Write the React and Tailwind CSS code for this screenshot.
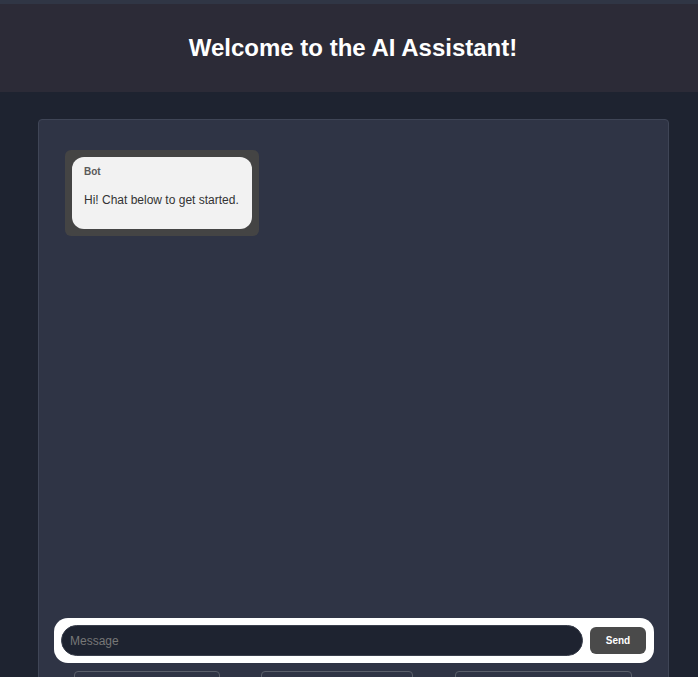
import React from "react"

const suggestions = [
  { w: "w-[146px]", label: "" },
  { w: "w-[152px]", label: "" },
  { w: "w-[177px]", label: "" },
]

const App = () => {
  return (
    <div className="min-h-[677px] bg-[#1e2330] font-['Liberation_Sans',Arial,sans-serif]">
      <div className="h-[4px] bg-[#303645]" />
      <header className="h-[88px] bg-[#2c2b37] flex items-center justify-center pl-[8px]">
        <h1 className="text-[24px] font-bold text-white">Welcome to the AI Assistant!</h1>
      </header>

      <main className="pt-[27px] pl-[38px]">
        <div className="w-[631px] h-[583px] bg-[#2f3445] border border-[#3f4556] rounded-[4px] flex flex-col">
          <div className="flex-1 pt-[30px] pl-[26px]">
            <div className="inline-block bg-[#444444] rounded-[6px] p-[7px]">
              <div className="bg-[#f2f2f2] rounded-[12px] w-[180px] h-[72px] pl-[12px] pt-[9px]">
                <div className="text-[10px] font-bold text-[#5a5a5a] leading-[12px]">Bot</div>
                <div className="text-[12px] text-[#333333] mt-[15px] leading-[14px]">Hi! Chat below to get started.</div>
              </div>
            </div>
          </div>

          <div className="pl-[15px] pr-[14px]">
            <div className="bg-white rounded-[14px] h-[45px] flex items-center pl-[7px] pr-[8px] gap-[7px]">
              <input
                className="flex-1 h-[31px] rounded-full bg-[#1e2330] border border-[#3a3f4c] px-[8px] text-[12px] text-white placeholder:text-[#777777] outline-none"
                placeholder="Message"
              />
              <button className="w-[56px] h-[27px] rounded-[6px] bg-[#4a4a4a] text-white text-[10px] font-bold">
                Send
              </button>
            </div>
          </div>

          <div className="flex pl-[35px] pt-[8px] gap-[41px]">
            {suggestions.map((s, i) => (
              <div
                key={i}
                className={`${s.w} h-[30px] border border-[#5a5f6a] rounded-[4px] ${i === 2 ? "ml-[1px]" : ""}`}
              />
            ))}
          </div>
        </div>
      </main>
    </div>
  )
}

export default App
